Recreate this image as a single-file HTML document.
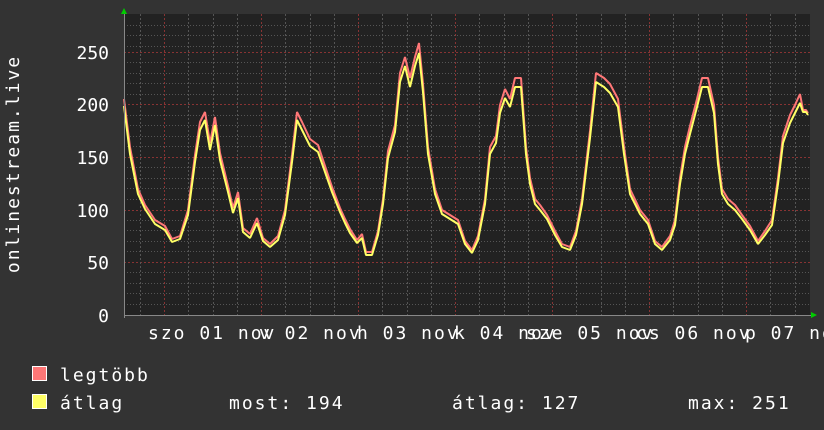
<!DOCTYPE html>
<html><head><meta charset="utf-8"><style>
html,body{margin:0;padding:0;background:#333;width:824px;height:430px;overflow:hidden}
svg text{font-family:"DejaVu Sans Mono","Liberation Mono",monospace;fill:#fff}
.ls{letter-spacing:2px}
</style></head><body>
<svg width="824" height="430" xmlns="http://www.w3.org/2000/svg">
<rect width="824" height="430" fill="#333"/>
<rect x="124" y="14" width="686" height="301" fill="#222"/>
<g stroke="#555" stroke-width="1" stroke-dasharray="1,2">
<line x1="124" x2="810" y1="25.5" y2="25.5"/><line x1="124" x2="810" y1="35.5" y2="35.5"/><line x1="124" x2="810" y1="46.5" y2="46.5"/>
<line x1="124" x2="810" y1="62.5" y2="62.5"/><line x1="124" x2="810" y1="73.5" y2="73.5"/><line x1="124" x2="810" y1="83.5" y2="83.5"/><line x1="124" x2="810" y1="94.5" y2="94.5"/>
<line x1="124" x2="810" y1="115.5" y2="115.5"/><line x1="124" x2="810" y1="125.5" y2="125.5"/><line x1="124" x2="810" y1="136.5" y2="136.5"/><line x1="124" x2="810" y1="146.5" y2="146.5"/>
<line x1="124" x2="810" y1="167.5" y2="167.5"/><line x1="124" x2="810" y1="178.5" y2="178.5"/><line x1="124" x2="810" y1="188.5" y2="188.5"/><line x1="124" x2="810" y1="199.5" y2="199.5"/>
<line x1="124" x2="810" y1="220.5" y2="220.5"/><line x1="124" x2="810" y1="230.5" y2="230.5"/><line x1="124" x2="810" y1="241.5" y2="241.5"/><line x1="124" x2="810" y1="251.5" y2="251.5"/>
<line x1="124" x2="810" y1="272.5" y2="272.5"/><line x1="124" x2="810" y1="283.5" y2="283.5"/><line x1="124" x2="810" y1="293.5" y2="293.5"/><line x1="124" x2="810" y1="304.5" y2="304.5"/>
</g>
<g stroke="#833" stroke-width="1" stroke-dasharray="2,2">
<line x1="124" x2="810" y1="52.5" y2="52.5"/><line x1="124" x2="810" y1="104.5" y2="104.5"/><line x1="124" x2="810" y1="157.5" y2="157.5"/><line x1="124" x2="810" y1="210.5" y2="210.5"/><line x1="124" x2="810" y1="262.5" y2="262.5"/>
<line y1="14" y2="315" x1="164.5" x2="164.5"/><line y1="14" y2="315" x1="261.5" x2="261.5"/><line y1="14" y2="315" x1="358.5" x2="358.5"/><line y1="14" y2="315" x1="455.5" x2="455.5"/><line y1="14" y2="315" x1="552.5" x2="552.5"/><line y1="14" y2="315" x1="649.5" x2="649.5"/><line y1="14" y2="315" x1="746.5" x2="746.5"/>
</g>
<g stroke="#555" stroke-dasharray="2,2">
<line y1="14" y2="315" x1="140.5" x2="140.5"/><line y1="14" y2="315" x1="188.5" x2="188.5"/><line y1="14" y2="315" x1="213.5" x2="213.5"/><line y1="14" y2="315" x1="237.5" x2="237.5"/>
<line y1="14" y2="315" x1="285.5" x2="285.5"/><line y1="14" y2="315" x1="310.5" x2="310.5"/><line y1="14" y2="315" x1="334.5" x2="334.5"/>
<line y1="14" y2="315" x1="382.5" x2="382.5"/><line y1="14" y2="315" x1="407.5" x2="407.5"/><line y1="14" y2="315" x1="431.5" x2="431.5"/>
<line y1="14" y2="315" x1="479.5" x2="479.5"/><line y1="14" y2="315" x1="504.5" x2="504.5"/><line y1="14" y2="315" x1="528.5" x2="528.5"/>
<line y1="14" y2="315" x1="576.5" x2="576.5"/><line y1="14" y2="315" x1="601.5" x2="601.5"/><line y1="14" y2="315" x1="625.5" x2="625.5"/>
<line y1="14" y2="315" x1="673.5" x2="673.5"/><line y1="14" y2="315" x1="698.5" x2="698.5"/><line y1="14" y2="315" x1="722.5" x2="722.5"/>
<line y1="14" y2="315" x1="770.5" x2="770.5"/><line y1="14" y2="315" x1="795.5" x2="795.5"/>
</g>
<polyline fill="none" stroke="#ff7777" stroke-width="2" stroke-linejoin="bevel" points="124,99 130,147 138,189 145,205 155,220 165,226 172,239 180,236 188,210 195,155 200,122 205,112 210,143 215,117 220,153 228,186 233,208 238,192 243,228 250,234 257,218 263,238 270,244 278,236 285,210 292,155 297,112 302,122 310,139 318,145 325,166 332,187 340,208 345,219 350,229 357,240 362,234 366,252 372,252 378,231 383,199 388,151 395,125 400,73 405,57 410,78 415,57 419,43 423,84 428,147 435,189 442,210 450,215 458,220 465,241 472,250 478,236 485,199 490,147 496,136 500,105 505,89 510,99 515,78 521,78 526,147 530,178 535,199 540,205 547,215 555,231 562,244 570,247 576,231 582,199 590,131 596,73 604,78 610,84 618,99 624,147 630,189 640,210 648,220 655,241 662,247 670,236 675,220 680,178 685,147 690,126 697,99 702,78 708,78 714,105 718,157 722,189 728,199 735,205 742,215 750,226 758,241 765,231 772,220 778,178 783,136 790,115 795,105 800,94 803,110 806,110 808,113"/>
<polyline fill="none" stroke="#ffff66" stroke-width="2" stroke-linejoin="bevel" points="124,106 130,154 138,194 145,209 155,224 165,230 172,242 180,239 188,215 195,162 200,130 205,120 210,150 215,125 220,160 228,192 233,213 238,198 243,232 250,238 257,223 263,241 270,247 278,240 285,215 292,162 297,120 302,130 310,146 318,152 325,172 332,192 340,212 345,223 350,233 357,243 362,238 366,255 372,255 378,235 383,204 388,158 395,132 400,82 405,66 410,87 415,66 419,53 423,92 428,154 435,194 442,214 450,219 458,224 465,244 472,253 478,240 485,204 490,154 496,143 500,113 505,98 510,107 515,87 521,87 526,154 530,184 535,204 540,210 547,219 555,235 562,247 570,250 576,235 582,204 590,138 596,82 604,87 610,93 618,107 624,154 630,194 640,214 648,224 655,244 662,250 670,240 675,225 680,184 685,154 690,134 697,107 702,87 708,87 714,113 718,164 722,194 728,204 735,210 742,219 750,230 758,244 765,235 772,225 778,184 783,143 790,123 795,113 800,103 803,112 806,112 808,115"/>
<line x1="124" y1="315.5" x2="812" y2="315.5" stroke="#888"/>
<line x1="124.5" y1="12" x2="124.5" y2="318" stroke="#888"/>
<polygon points="121,14 127,14 124,8" fill="#0c0"/>
<polygon points="811,312 811,318 817,315" fill="#0c0"/>
<g font-size="18" text-anchor="end">
<text x="109" y="59">250</text><text x="109" y="111">200</text><text x="109" y="164">150</text><text x="109" y="217">100</text><text x="109" y="269">50</text><text x="109" y="322">0</text>
</g>
<g font-size="18" class="ls">
<text x="148" y="339">szo 01 nov</text><text x="259" y="339">v 02 nov</text><text x="357" y="339">h 03 nov</text><text x="454" y="339">k 04 nov</text><text x="526" y="339">sze 05 nov</text><text x="636" y="339">cs 06 nov</text><text x="745" y="339">p 07 nov</text>
</g>
<text font-size="18" class="ls" transform="translate(19,164) rotate(-90)" text-anchor="middle">onlinestream.live</text>
<rect x="32.5" y="366.5" width="14" height="14" fill="#ff7777" stroke="#fff"/>
<rect x="32.5" y="394.5" width="14" height="14" fill="#ffff66" stroke="#fff"/>
<g font-size="18" class="ls">
<text x="60" y="381">legtöbb</text>
<text x="60" y="409">átlag</text>
<text x="229" y="409">most: 194</text>
<text x="452" y="409">átlag: 127</text>
<text x="688" y="409">max: 251</text>
</g>
</svg>
</body></html>
